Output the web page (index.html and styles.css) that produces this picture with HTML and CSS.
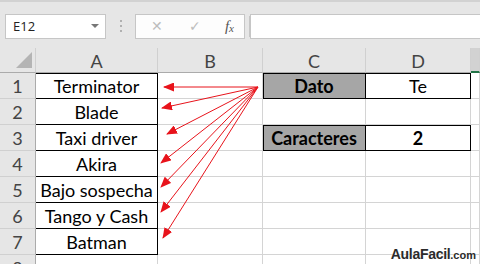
FILE: index.html
```html
<!DOCTYPE html>
<html lang="es">
<head>
    <meta charset="UTF-8">
    <title>Hoja de cálculo</title>
    <link rel="stylesheet" href="styles.css">
</head>
<body>
    <div class="toolbar">
        <div class="namebox">
            <span>E12</span>
            <span class="caret"></span>
        </div>
        <div class="dots"><i></i><i></i><i></i></div>
        <div class="fxbuttons">
            <span class="btn-x">✕</span>
            <span class="btn-ok">✓</span>
            <span class="btn-fx">f<sub>x</sub></span>
        </div>
        <div class="formula"></div>
    </div>

    <div class="sheet">
        <div class="hd corner"><span class="tri"></span></div>
        <div class="hd">A</div>
        <div class="hd">B</div>
        <div class="hd">C</div>
        <div class="hd">D</div>
        <div class="hd sel"></div>

        <div class="rh">1</div>
        <div class="c box top">Terminator</div>
        <div class="c"></div>
        <div class="c box top left grey bold">Dato</div>
        <div class="c box top">Te</div>
        <div class="c"></div>

        <div class="rh">2</div>
        <div class="c box">Blade</div>
        <div class="c"></div>
        <div class="c"></div>
        <div class="c"></div>
        <div class="c"></div>

        <div class="rh">3</div>
        <div class="c box">Taxi driver</div>
        <div class="c"></div>
        <div class="c box top left grey bold">Caracteres</div>
        <div class="c box top bold">2</div>
        <div class="c"></div>

        <div class="rh">4</div>
        <div class="c box">Akira</div>
        <div class="c"></div>
        <div class="c"></div>
        <div class="c"></div>
        <div class="c"></div>

        <div class="rh">5</div>
        <div class="c box">Bajo sospecha</div>
        <div class="c"></div>
        <div class="c"></div>
        <div class="c"></div>
        <div class="c"></div>

        <div class="rh">6</div>
        <div class="c box">Tango y Cash</div>
        <div class="c"></div>
        <div class="c"></div>
        <div class="c"></div>
        <div class="c"></div>

        <div class="rh">7</div>
        <div class="c box">Batman</div>
        <div class="c"></div>
        <div class="c"></div>
        <div class="c"></div>
        <div class="c"></div>

        <div class="rh">8</div>
        <div class="c"></div>
        <div class="c"></div>
        <div class="c"></div>
        <div class="c"></div>
        <div class="c"></div>
    </div>

    <!-- flechas desde D1 hacia la lista -->
    <svg class="arrows" width="480" height="264" viewBox="0 0 480 264">
        <defs>
            <marker id="head" markerWidth="11" markerHeight="9" refX="10" refY="4.5" orient="auto" markerUnits="userSpaceOnUse">
                <path d="M0,0 L11,4.5 L0,9 Z" fill="#e8131b"/>
            </marker>
        </defs>
        <g stroke="#e8131b" stroke-width="1" marker-end="url(#head)">
            <line x1="258" y1="87" x2="164" y2="87"/>
            <line x1="258" y1="87" x2="162" y2="108"/>
            <line x1="258" y1="87" x2="167" y2="134"/>
            <line x1="258" y1="87" x2="161" y2="163"/>
            <line x1="258" y1="87" x2="161" y2="187"/>
            <line x1="258" y1="87" x2="161" y2="212"/>
            <line x1="258" y1="87" x2="163" y2="238"/>
        </g>
    </svg>

    <div class="brand">AulaFacil<small>.com</small></div>
</body>
</html>
```

FILE: styles.css
```css
body {
    margin: 0;
    width: 480px;
    height: 264px;
    overflow: hidden;
    position: relative;
    background: #fff;
    font-family: Lato, "Open Sans", sans-serif;
}

.toolbar {
    height: 48px;
    box-sizing: border-box;
    background: #e6e6e6;
    border-top: 2px solid #d2d2d2;
    display: flex;
    align-items: center;
    padding: 2px 0 0 5px;
}

.namebox {
    width: 101px;
    height: 25px;
    box-sizing: border-box;
    background: #fff;
    border: 1px solid #c6c6c6;
    display: flex;
    align-items: center;
    justify-content: space-between;
    padding: 0 6px 0 7px;
    font-family: "Open Sans", sans-serif;
    font-size: 13px;
    color: #222;
}

.caret {
    width: 0;
    height: 0;
    border-left: 4px solid transparent;
    border-right: 4px solid transparent;
    border-top: 4px solid #777;
}

.dots {
    width: 29px;
    display: flex;
    flex-direction: column;
    align-items: center;
    gap: 3px;
}

.dots i {
    width: 2px;
    height: 2px;
    background: #b0b0b0;
}

.fxbuttons {
    width: 110px;
    height: 25px;
    box-sizing: border-box;
    background: #fdfdfd;
    border: 1px solid #c6c6c6;
    display: flex;
    align-items: center;
    justify-content: space-between;
    padding: 0 10px 0 15px;
    color: #bdbdbd;
    font-family: "DejaVu Sans", sans-serif;
    font-size: 14px;
}

.btn-ok {
    margin-left: 2px;
}

.btn-fx {
    font-family: "Liberation Serif", serif;
    font-style: italic;
    font-size: 15px;
    color: #555;
}

.btn-fx sub {
    font-size: 11px;
    vertical-align: -1px;
}

.formula {
    flex: 1;
    height: 25px;
    box-sizing: border-box;
    margin-left: 5px;
    background: #fff;
    border: 1px solid #c6c6c6;
    border-right: none;
    box-shadow: -3px 0 0 -2px #c6c6c6;
}

.sheet {
    display: grid;
    grid-template-columns: 36px 122px 105px 103px 105px 9px;
    grid-template-rows: 25px repeat(8, 26px);
    font-size: 18px;
}

.sheet > div {
    box-sizing: border-box;
    display: flex;
    align-items: center;
    justify-content: center;
    white-space: nowrap;
    overflow: hidden;
}

.hd {
    background: #e6e6e6;
    border-right: 1px solid #d0d0d0;
    border-bottom: 1px solid #ababab;
    color: #444;
    padding-top: 2px;
}

.hd.sel {
    background: #d2d2d2;
    border-bottom: 2px solid #217346;
}

.corner {
    position: relative;
}

.tri {
    position: absolute;
    right: 3px;
    bottom: 4px;
    width: 0;
    height: 0;
    border-left: 16px solid transparent;
    border-bottom: 16px solid #b4b4b4;
}

.rh {
    background: #e6e6e6;
    border-right: 1px solid #ababab;
    border-bottom: 1px solid #d0d0d0;
    color: #444;
}

.c {
    border-right: 1px solid #d4d4d4;
    border-bottom: 1px solid #d4d4d4;
    color: #000;
}

.c.box {
    border-right-color: #000;
    border-bottom-color: #000;
}

.c.top {
    box-shadow: inset 0 1px 0 #000;
}

.c.top.left {
    box-shadow: inset 1px 1px 0 #000;
}

.grey {
    background: #a6a6a6;
}

.bold {
    font-weight: bold;
}

.arrows {
    position: absolute;
    left: 0;
    top: 0;
    pointer-events: none;
}

.brand {
    position: absolute;
    right: 4px;
    bottom: 2px;
    font-family: "Liberation Sans", sans-serif;
    font-weight: bold;
    font-size: 14px;
    letter-spacing: -0.3px;
    color: #2b2b2b;
    text-shadow: 0 0 2px #fff;
}

.brand small {
    font-size: 11px;
    letter-spacing: 0;
}
```
